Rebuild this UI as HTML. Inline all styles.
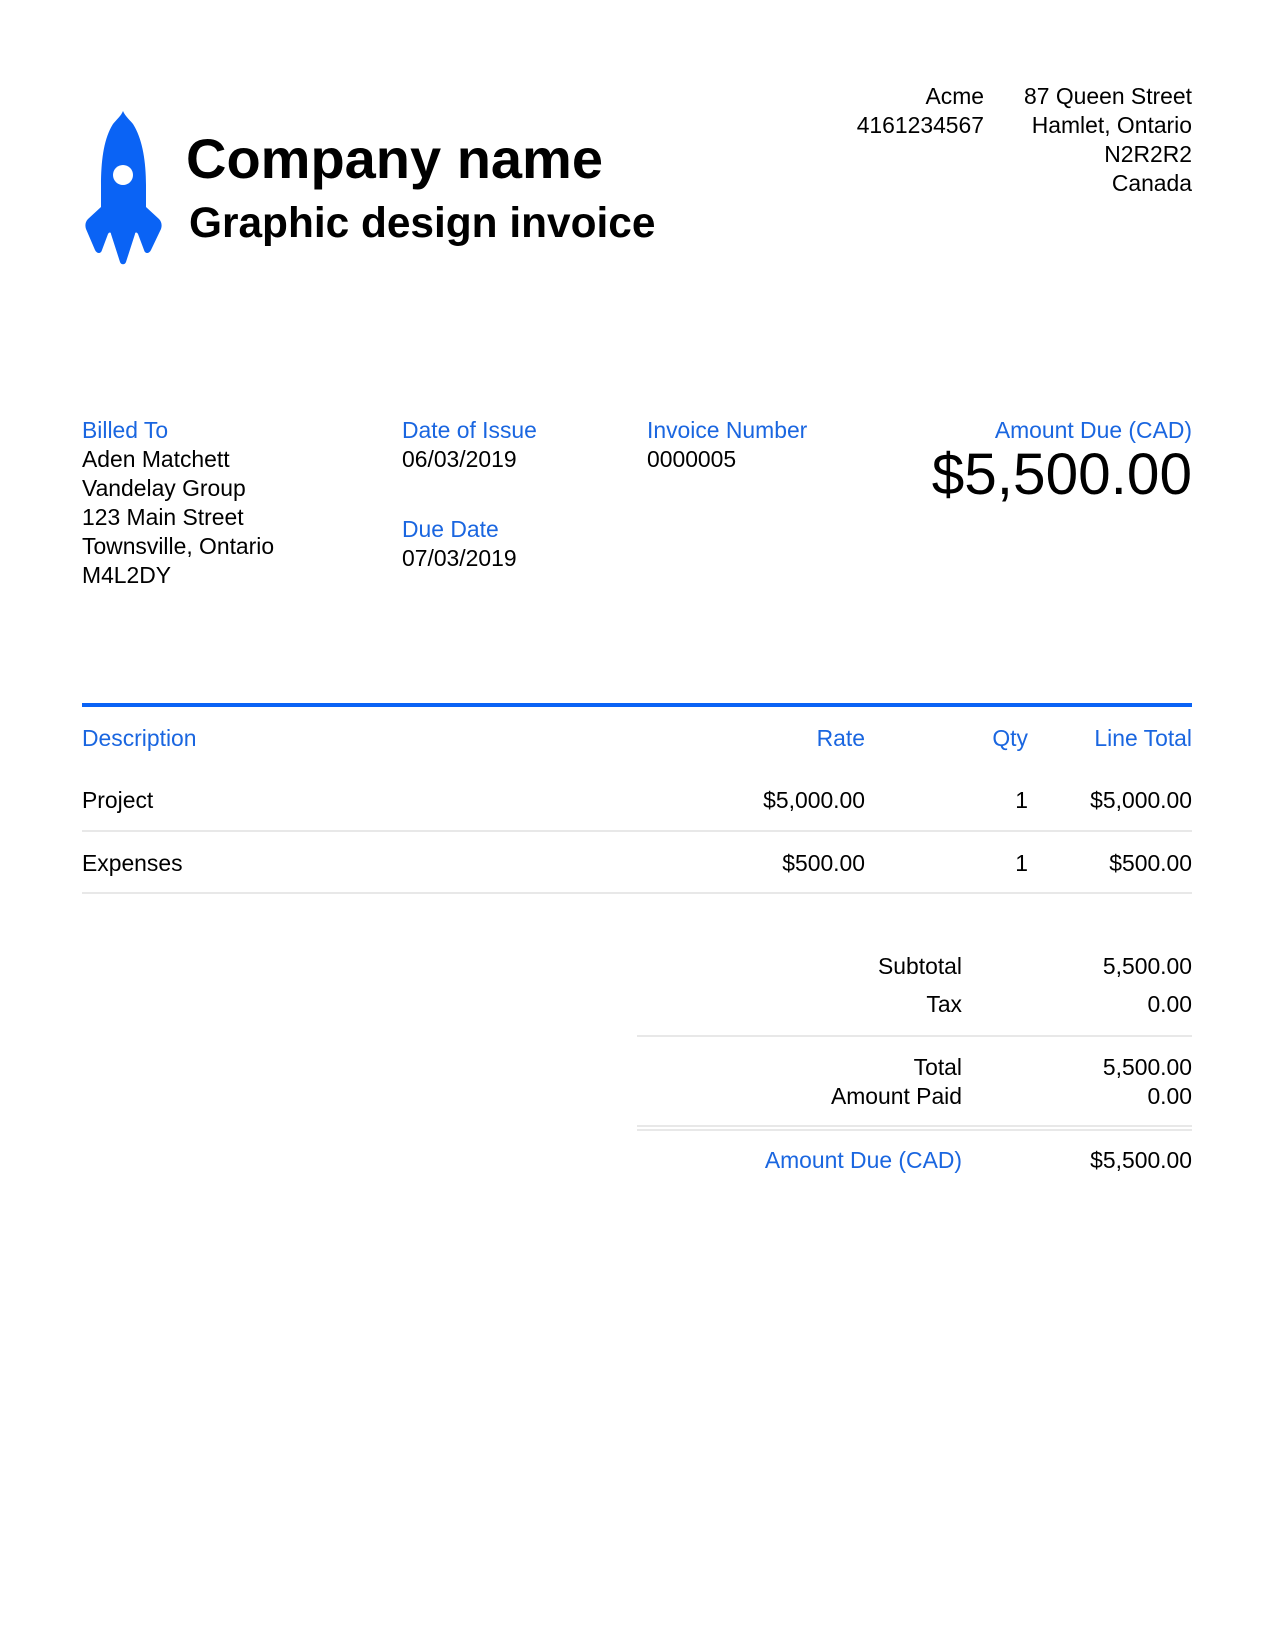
<!DOCTYPE html>
<html><head><meta charset="utf-8"><style>
html,body{margin:0;padding:0;background:#fff;}
body{width:1275px;height:1650px;position:relative;overflow:hidden;font-family:"Liberation Sans",Arial,sans-serif;color:#000;}
.t{position:absolute;font-size:22.9px;line-height:23px;white-space:nowrap;}
.r{text-align:right;}
.b{color:#1a66e0;}
.hl{position:absolute;height:2px;background:#e8e8e8;}
</style></head><body>
<svg style="position:absolute;left:0;top:0" width="200" height="280" viewBox="0 0 200 280">
<path fill="#0a63f5" d="M123 111 C121 116 117 119 113 124 C104 138 101 160 101 185 L101 207 L88 219 C85 222 85 226 86 229 L95 250 C97 254 101 254 102 250 L108 234 C109 232 111 232 111 234 L120 262 C121 265 125 265 126 262 L135 234 C135 232 137 232 138 234 L144 250 C145 254 149 254 151 250 L161 229 C162 226 162 222 159 219 L146 207 L146 185 C146 160 142 138 133 124 C129 119 125 116 123 111 Z"/>
<circle cx="123" cy="175" r="10" fill="#fff"/>
</svg>
<div class="t" style="left:186px;top:131px;font-size:56px;line-height:56px;font-weight:bold;">Company name</div>
<div class="t" style="left:189px;top:202px;font-size:42.4px;line-height:42px;font-weight:bold;">Graphic design invoice</div>

<div class="t r" style="right:291px;top:85px;">Acme</div>
<div class="t r" style="right:291px;top:114px;">4161234567</div>
<div class="t r" style="right:83px;top:85px;">87 Queen Street</div>
<div class="t r" style="right:83px;top:114px;">Hamlet, Ontario</div>
<div class="t r" style="right:83px;top:143px;">N2R2R2</div>
<div class="t r" style="right:83px;top:172px;">Canada</div>

<div class="t b" style="left:82px;top:419px;">Billed To</div>
<div class="t" style="left:82px;top:448px;">Aden Matchett</div>
<div class="t" style="left:82px;top:477px;">Vandelay Group</div>
<div class="t" style="left:82px;top:506px;">123 Main Street</div>
<div class="t" style="left:82px;top:535px;">Townsville, Ontario</div>
<div class="t" style="left:82px;top:564px;">M4L2DY</div>

<div class="t b" style="left:402px;top:419px;">Date of Issue</div>
<div class="t" style="left:402px;top:448px;">06/03/2019</div>
<div class="t b" style="left:402px;top:518px;">Due Date</div>
<div class="t" style="left:402px;top:547px;">07/03/2019</div>

<div class="t b" style="left:647px;top:419px;">Invoice Number</div>
<div class="t" style="left:647px;top:448px;">0000005</div>

<div class="t b r" style="right:83px;top:419px;">Amount Due (CAD)</div>
<div class="t r" style="right:83px;top:446px;font-size:58.5px;line-height:58px;">$5,500.00</div>

<div style="position:absolute;left:82px;top:703px;width:1110px;height:4px;background:#0a63f5;"></div>
<div class="t b" style="left:82px;top:727px;">Description</div>
<div class="t b r" style="right:410px;top:727px;">Rate</div>
<div class="t b r" style="right:247px;top:727px;">Qty</div>
<div class="t b r" style="right:83px;top:727px;">Line Total</div>

<div class="t" style="left:82px;top:789px;">Project</div>
<div class="t r" style="right:410px;top:789px;">$5,000.00</div>
<div class="t r" style="right:247px;top:789px;">1</div>
<div class="t r" style="right:83px;top:789px;">$5,000.00</div>
<div class="hl" style="left:82px;top:830px;width:1110px;"></div>

<div class="t" style="left:82px;top:852px;">Expenses</div>
<div class="t r" style="right:410px;top:852px;">$500.00</div>
<div class="t r" style="right:247px;top:852px;">1</div>
<div class="t r" style="right:83px;top:852px;">$500.00</div>
<div class="hl" style="left:82px;top:892px;width:1110px;"></div>

<div class="t r" style="right:313px;top:955px;">Subtotal</div>
<div class="t r" style="right:83px;top:955px;">5,500.00</div>
<div class="t r" style="right:313px;top:993px;">Tax</div>
<div class="t r" style="right:83px;top:993px;">0.00</div>
<div class="hl" style="left:637px;top:1035px;width:555px;"></div>
<div class="t r" style="right:313px;top:1056px;">Total</div>
<div class="t r" style="right:83px;top:1056px;">5,500.00</div>
<div class="t r" style="right:313px;top:1085px;">Amount Paid</div>
<div class="t r" style="right:83px;top:1085px;">0.00</div>
<div class="hl" style="left:637px;top:1125px;width:555px;"></div>
<div class="hl" style="left:637px;top:1129px;width:555px;"></div>
<div class="t b r" style="right:313px;top:1149px;">Amount Due (CAD)</div>
<div class="t r" style="right:83px;top:1149px;">$5,500.00</div>
</body></html>
